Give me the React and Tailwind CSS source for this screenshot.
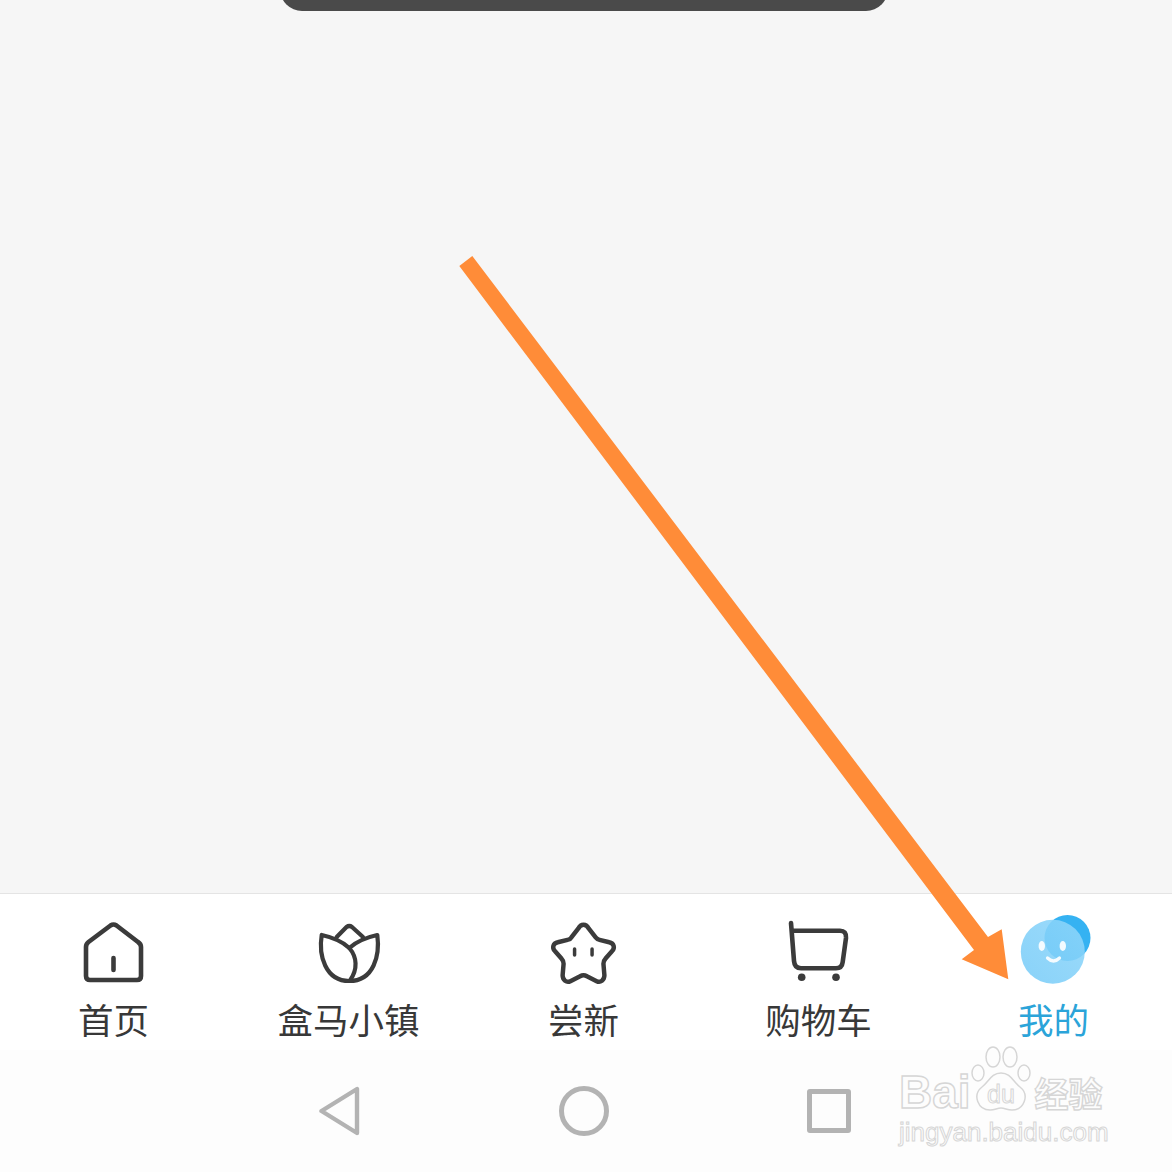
const cjk = 'font-["Noto_Sans_CJK_SC","Noto_Sans",sans-serif]';

function HomeIcon() {
    return (
        <svg width="64" height="68" viewBox="1 -1 64 68" fill="none" stroke="#3b3b3b" strokeWidth="4.6" strokeLinecap="round" strokeLinejoin="round">
            <path d="M7.5 23 L29.5 6.5 Q32.5 4.5 35.5 6.5 L57 23 Q60 25 60 28 V57 Q60 61 56 61 H9 Q5 61 5 57 V28 Q5 25 7.5 23 Z" />
            <path d="M32.5 39 V51" />
        </svg>
    );
}

function TulipIcon() {
    return (
        <svg width="68" height="68" viewBox="0 -1 68 68" fill="none" stroke="#3b3b3b" strokeWidth="4.2" strokeLinecap="round" strokeLinejoin="round">
            <path d="M6.7 16 C3.5 36 10 62 34.3 62 C59 62 65 36 62.3 16 C53 18 42 22 34.3 29 C27 22 16 18 6.7 16 Z" />
            <path d="M21.7 18 L31.5 8 Q34.3 6 37 8 L48 18" />
            <path d="M34.3 29 C42 38 43 50 35 61.5" />
        </svg>
    );
}

function StarIcon() {
    return (
        <svg width="72" height="68" viewBox="-1 -2 74 70" fill="none" stroke="#3b3b3b" strokeWidth="4.6" strokeLinecap="round" strokeLinejoin="round">
            <path d="M35.5 5 C38 5 40 7 41 9 L48 18 Q49.5 20 52 20.5 L62 23 C67 24 68 29 65 32 L58 40 Q56 42 56 45 L57 57 C57 62 53 65 49 63 L39 58 Q35.5 56 32 58 L22 63 C18 65 14 62 14 57 L15 45 Q15 42 13 40 L6 32 C3 29 4 24 9 23 L19 20.5 Q22 20 23 18 L30 9 C31 7 33 5 35.5 5 Z" />
            <path d="M26.3 30 V36" strokeWidth="3.6" />
            <path d="M44.3 30 V36" strokeWidth="3.6" />
        </svg>
    );
}

function CartIcon() {
    return (
        <svg width="68" height="68" viewBox="0 0 68 68" fill="none" stroke="#3b3b3b" strokeWidth="4.6" strokeLinecap="round" strokeLinejoin="round">
            <path d="M6 5 L9 43 Q9.6 50.3 16 50.3 H51 Q57 50.3 57.7 44 L61 20 Q61.5 12.7 55 12.7 H7.7" />
            <circle cx="16.7" cy="59.3" r="3.8" fill="#3b3b3b" stroke="none" />
            <circle cx="51" cy="59.3" r="3.8" fill="#3b3b3b" stroke="none" />
        </svg>
    );
}

function AvatarIcon() {
    return (
        <svg width="76" height="76" viewBox="-1.5 3 76 76">
            <defs>
                <linearGradient id="face" x1="0" y1="1" x2="1" y2="0">
                    <stop offset="0" stopColor="#78ccf8" />
                    <stop offset="1" stopColor="#8fd6fa" />
                </linearGradient>
            </defs>
            <circle cx="50" cy="27" r="23" fill="#35b2f2" />
            <circle cx="35.3" cy="40.7" r="32" fill="url(#face)" fillOpacity="0.88" />
            <ellipse cx="24.3" cy="35" rx="3.2" ry="5" fill="#fff" fillOpacity="0.9" />
            <ellipse cx="45.3" cy="35" rx="3.2" ry="5" fill="#fff" fillOpacity="0.9" />
            <path d="M30 47 Q36 53 42 47" fill="none" stroke="#fff" strokeOpacity="0.9" strokeWidth="3.2" strokeLinecap="round" />
        </svg>
    );
}

const tabs = [
    { label: '首页', icon: HomeIcon },
    { label: '盒马小镇', icon: TulipIcon },
    { label: '尝新', icon: StarIcon },
    { label: '购物车', icon: CartIcon },
    { label: '我的', icon: AvatarIcon, active: true },
];

export default function App() {
    return (
        <div className={`relative h-[1172px] w-[1172px] overflow-hidden flex flex-col bg-[#fdfdfd] ${cjk}`}>
            {/* Grey page area */}
            <div className="flex-1 bg-[#f6f6f6] flex justify-center overflow-hidden">
                <div className="w-[608px] h-[31px] -mt-[20px] bg-[#4a4a4a] rounded-b-[22px] -ml-[4px]" />
            </div>

            {/* Tab bar */}
            <div className="h-[157px] shrink-0 bg-white border-t border-[#e4e4e4] pt-[24px]">
                <div className="grid grid-cols-[repeat(5,235px)] -ml-[4px]">
                    {tabs.map((tab) => (
                        <div key={tab.label} className="flex flex-col items-center">
                            <div className="h-[68px] flex items-center justify-center">
                                <tab.icon />
                            </div>
                            <span className={`text-[35.5px] leading-[34px] mt-[16px] ${tab.active ? 'text-[#2ba4d9]' : 'text-[#383838]'}`}>
                                {tab.label}
                            </span>
                        </div>
                    ))}
                </div>
            </div>

            {/* Android nav bar */}
            <div className="h-[122px] shrink-0 bg-[#fdfdfd] flex items-center justify-center gap-[198px] pr-[3px]">
                <svg width="42" height="50" viewBox="0 0 42 50" fill="none" stroke="#b3b3b3" strokeWidth="4.4" strokeLinejoin="round">
                    <path d="M38 3 V47 L2.5 25 Z" />
                </svg>
                <div className="w-[50px] h-[50px] rounded-full border-[5px] border-[#b3b3b3]" />
                <div className="w-[44px] h-[44px] rounded-[3px] border-[5px] border-[#b3b3b3]" />
            </div>

            {/* Annotation arrow */}
            <svg className="absolute left-0 top-0 pointer-events-none" width="1172" height="1172" viewBox="0 0 1172 1172">
                <polygon points="459.3,266 472.3,256 988,937 1001.7,929.3 1008.3,979.3 961.7,959.3 974,950" fill="#ff8c38" />
            </svg>

            {/* Baidu watermark */}
            <div className="absolute left-[899px] top-[1046px] w-[210px] flex flex-col pointer-events-none">
                <div className="flex items-end h-[66px]">
                    <span className={`text-[46px] leading-[40px] font-bold text-transparent [-webkit-text-stroke:1.4px_#d6d6d6] font-["Liberation_Sans",sans-serif]`}>Bai</span>
                    <svg width="62" height="66" viewBox="0 0 62 66" fill="none" stroke="#d6d6d6" strokeWidth="1.5" className="-ml-[1px] shrink-0">
                        <ellipse cx="8" cy="27" rx="6" ry="8" />
                        <ellipse cx="23" cy="11" rx="7" ry="10" />
                        <ellipse cx="40" cy="11" rx="7" ry="10" />
                        <ellipse cx="54" cy="27" rx="6" ry="8" />
                        <path d="M31 27 C41 27 43 36 50 41 C60 49 54 64 42 64 C37 64 35 62 31 62 C27 62 25 64 20 64 C8 64 2 49 12 41 C19 36 21 27 31 27 Z" />
                        <text x="31" y="57" textAnchor="middle" fontSize="25" fontFamily="Liberation Sans, sans-serif" fill="none" stroke="#d6d6d6" strokeWidth="1">du</text>
                    </svg>
                    <span className="text-[34px] leading-[38px] font-bold text-transparent [-webkit-text-stroke:1.4px_#d6d6d6] ml-[3px] whitespace-nowrap">经验</span>
                </div>
                <span className={`mt-[6px] text-[26px] leading-[28px] text-transparent [-webkit-text-stroke:1px_#d6d6d6] whitespace-nowrap font-["Liberation_Sans",sans-serif]`}>jingyan.baidu.com</span>
            </div>
        </div>
    );
}
